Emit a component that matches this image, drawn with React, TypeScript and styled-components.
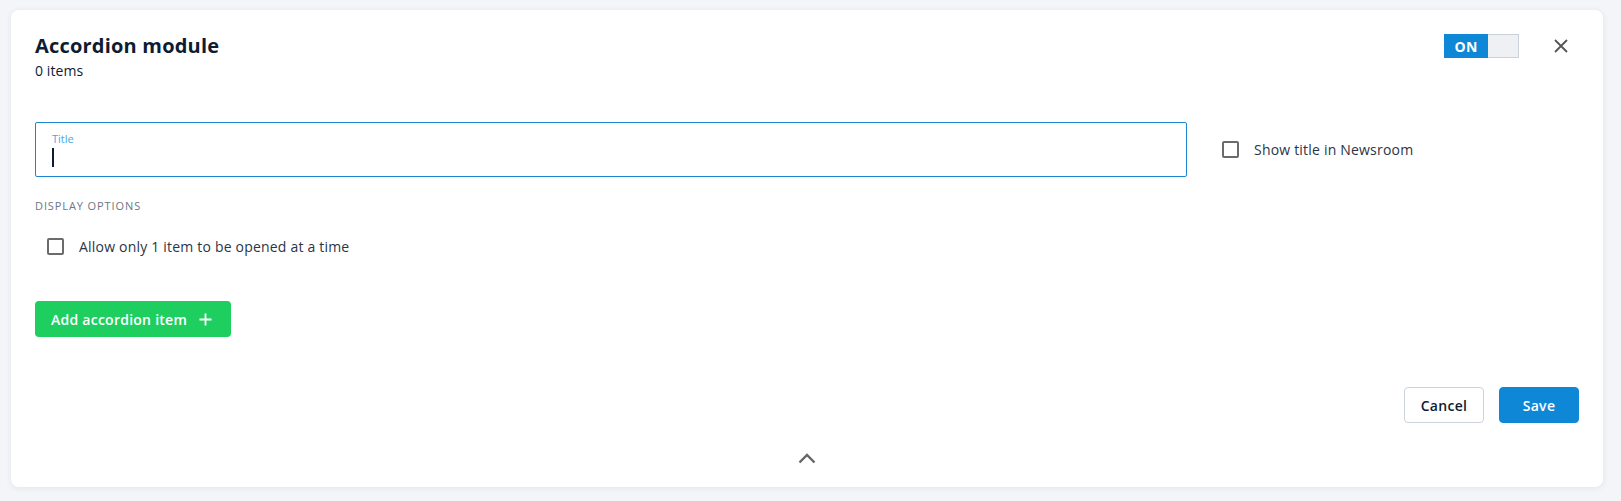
import React from 'react';
import styled, { createGlobalStyle } from 'styled-components';

const GlobalStyle = createGlobalStyle`
  html, body {
    margin: 0;
    padding: 0;
    background: #f3f5f8;
    font-family: 'Open Sans', 'Noto Sans', sans-serif;
    color: #1c2a3f;
  }
  * {
    box-sizing: border-box;
  }
`;

const Page = styled.div`
  padding: 10px 18px 14px 11px;
`;

const Card = styled.section`
  background: #fff;
  border-radius: 8px;
  box-shadow: 0 1px 6px rgba(30, 45, 70, 0.08);
  padding: 22px 24px 0;
  height: 477px;
  display: flex;
  flex-direction: column;
`;

const Header = styled.div`
  display: flex;
  justify-content: space-between;
  align-items: flex-start;
`;

const Heading = styled.h1`
  margin: 0;
  font-size: 20px;
  line-height: 28px;
  font-weight: 700;
  letter-spacing: 0.2px;
  color: #0e1b33;
`;

const Count = styled.div`
  margin-top: 1px;
  font-size: 14px;
  line-height: 20px;
  letter-spacing: 0.1px;
  color: #0e1b33;
`;

const HeaderActions = styled.div`
  display: flex;
  align-items: center;
  gap: 35px;
  margin-top: 2px;
  margin-right: 11px;
`;

const Toggle = styled.div`
  display: flex;
  width: 75px;
  height: 24px;
`;

const ToggleOn = styled.span`
  flex: 0 0 44px;
  background: #0e88d6;
  color: #fff;
  font-size: 14px;
  font-weight: 700;
  display: flex;
  align-items: center;
  justify-content: center;
  letter-spacing: 0.3px;
`;

const ToggleOff = styled.span`
  flex: 1;
  background: #eef0f3;
  border: 1px solid #c9d1db;
  border-left: none;
`;

const IconButton = styled.button`
  border: none;
  background: none;
  padding: 0;
  display: flex;
  color: #555;
  cursor: pointer;
`;

const FormRow = styled.div`
  display: flex;
  align-items: center;
  gap: 35px;
  margin-top: 41px;
`;

const Field = styled.label`
  flex: 0 0 1152px;
  height: 55px;
  border: 1px solid #1a87d0;
  border-radius: 2px;
  padding: 8px 16px 0;
  display: flex;
  flex-direction: column;
`;

const FieldLabel = styled.span`
  font-size: 11px;
  line-height: 16px;
  color: #4aa6df;
`;

const Caret = styled.span`
  display: block;
  width: 1.5px;
  height: 19px;
  margin-top: 1px;
  background: #0e1b33;
`;

const CheckRow = styled.label<{ $indent?: number }>`
  display: flex;
  align-items: center;
  gap: 15px;
  padding-left: ${p => p.$indent ?? 0}px;
  font-size: 14px;
  letter-spacing: 0.2px;
  color: #2a3547;
  cursor: pointer;
`;

const Box = styled.span`
  width: 17px;
  height: 17px;
  border: 2px solid #6b6b6b;
  border-radius: 2px;
  flex-shrink: 0;
`;

const SectionLabel = styled.div`
  margin-top: 21px;
  font-size: 11px;
  line-height: 16px;
  letter-spacing: 0.9px;
  color: #6b7785;
  text-transform: uppercase;
`;

const OptionList = styled.div`
  margin-top: 23px;
`;

const AddButton = styled.button`
  margin-top: 45px;
  align-self: flex-start;
  height: 36px;
  width: 196px;
  border: none;
  border-radius: 4px;
  background: #1ecf60;
  color: #fff;
  font-family: inherit;
  font-size: 14px;
  font-weight: 600;
  letter-spacing: 0.25px;
  display: flex;
  align-items: center;
  gap: 12px;
  padding: 0 16px;
  cursor: pointer;
`;

const Footer = styled.div`
  margin-top: 50px;
  display: flex;
  justify-content: flex-end;
  gap: 15px;
`;

const Button = styled.button<{ $primary?: boolean }>`
  width: 80px;
  height: 36px;
  border-radius: 4px;
  font-family: inherit;
  font-size: 14px;
  font-weight: 600;
  letter-spacing: 0.3px;
  cursor: pointer;
  border: 1px solid ${p => (p.$primary ? '#0e88d6' : '#ccd3dc')};
  background: ${p => (p.$primary ? '#0e88d6' : '#fff')};
  color: ${p => (p.$primary ? '#fff' : '#0e1b33')};
`;

const Collapse = styled.div`
  display: flex;
  justify-content: center;
  margin-top: 30px;
  color: #666;
`;

const App: React.FC = () => (
  <>
    <GlobalStyle />
    <Page>
      <Card>
        <Header>
          <div>
            <Heading>Accordion module</Heading>
            <Count>0 items</Count>
          </div>
          <HeaderActions>
            <Toggle>
              <ToggleOn>ON</ToggleOn>
              <ToggleOff />
            </Toggle>
            <IconButton aria-label="Close">
              <svg width="14" height="14" viewBox="0 0 14 14">
                <path d="M1 1L13 13M13 1L1 13" stroke="currentColor" strokeWidth="1.8" />
              </svg>
            </IconButton>
          </HeaderActions>
        </Header>

        <FormRow>
          <Field>
            <FieldLabel>Title</FieldLabel>
            <Caret />
          </Field>
          <CheckRow>
            <Box />
            Show title in Newsroom
          </CheckRow>
        </FormRow>

        <SectionLabel>Display options</SectionLabel>
        <OptionList>
          <CheckRow $indent={12}>
            <Box />
            Allow only 1 item to be opened at a time
          </CheckRow>
        </OptionList>

        <AddButton>
          Add accordion item
          <svg width="13" height="13" viewBox="0 0 13 13">
            <path d="M6.5 0.5V12.5M0.5 6.5H12.5" stroke="currentColor" strokeWidth="1.8" />
          </svg>
        </AddButton>

        <Footer>
          <Button>Cancel</Button>
          <Button $primary>Save</Button>
        </Footer>

        <Collapse>
          <svg width="18" height="11" viewBox="0 0 18 11">
            <path d="M1.5 9.5L9 2L16.5 9.5" stroke="currentColor" strokeWidth="2.4" fill="none" />
          </svg>
        </Collapse>
      </Card>
    </Page>
  </>
);

export default App;
